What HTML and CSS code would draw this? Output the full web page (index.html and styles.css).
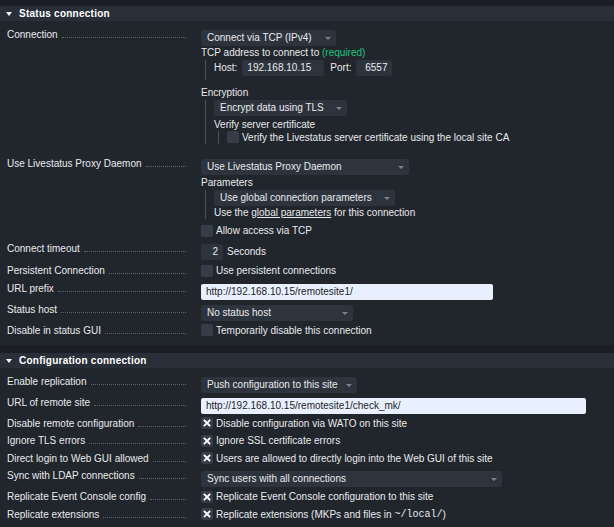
FILE: index.html
```html
<!DOCTYPE html>
<html>
<head>
<meta charset="utf-8">
<link rel="stylesheet" href="styles.css">
</head>
<body>
<div class="page">
  <section class="sec">
    <div class="sec-head"><span class="tri"></span>Status connection</div>
    <div class="sec-body">
      <div class="row">
        <div class="lbl"><span>Connection</span><span class="dots"></span></div>
        <div class="val">
          <div class="sel w135">Connect via TCP (IPv4)<span class="arr"></span></div>
          <div class="line">TCP address to connect to <span class="req">(required)</span></div>
          <div class="nest nest-host">
            <div class="hostrow">
              <span>Host:</span><span class="inp w82">192.168.10.15</span>
              <span class="port-lbl">Port:</span><span class="inp w36 right">6557</span>
            </div>
          </div>
          <div class="line enc">Encryption</div>
          <div class="nest nest-enc">
            <div class="sel w133">Encrypt data using TLS<span class="arr"></span></div>
            <div class="line verify">Verify server certificate</div>
            <div class="nest nest-deep">
              <div class="cb"><span class="box"></span>Verify the Livestatus server certificate using the local site CA</div>
            </div>
          </div>
        </div>
      </div>
      <div class="row">
        <div class="lbl"><span>Use Livestatus Proxy Daemon</span><span class="dots"></span></div>
        <div class="val">
          <div class="sel w208">Use Livestatus Proxy Daemon<span class="arr"></span></div>
          <div class="line params">Parameters</div>
          <div class="nest nest-params">
            <div class="sel w181">Use global connection parameters<span class="arr"></span></div>
            <div class="line">Use the <span class="link">global parameters</span> for this connection</div>
          </div>
          <div class="cb allow"><span class="box"></span>Allow access via TCP</div>
        </div>
      </div>
      <div class="row row-timeout">
        <div class="lbl"><span>Connect timeout</span><span class="dots"></span></div>
        <div class="val inline">
          <span class="inp w22 right">2</span><span class="unit">Seconds</span>
        </div>
      </div>
      <div class="row">
        <div class="lbl"><span>Persistent Connection</span><span class="dots"></span></div>
        <div class="val">
          <div class="cb"><span class="box"></span>Use persistent connections</div>
        </div>
      </div>
      <div class="row">
        <div class="lbl"><span>URL prefix</span><span class="dots"></span></div>
        <div class="val">
          <div class="inp light w292">http://192.168.10.15/remotesite1/</div>
        </div>
      </div>
      <div class="row">
        <div class="lbl"><span>Status host</span><span class="dots"></span></div>
        <div class="val">
          <div class="sel w152">No status host<span class="arr"></span></div>
        </div>
      </div>
      <div class="row">
        <div class="lbl"><span>Disable in status GUI</span><span class="dots"></span></div>
        <div class="val">
          <div class="cb"><span class="box"></span>Temporarily disable this connection</div>
        </div>
      </div>
    </div>
  </section>

  <section class="sec">
    <div class="sec-head"><span class="tri"></span>Configuration connection</div>
    <div class="sec-body">
      <div class="row">
        <div class="lbl"><span>Enable replication</span><span class="dots"></span></div>
        <div class="val">
          <div class="sel w156">Push configuration to this site<span class="arr"></span></div>
        </div>
      </div>
      <div class="row">
        <div class="lbl"><span>URL of remote site</span><span class="dots"></span></div>
        <div class="val">
          <div class="inp light w385">http://192.168.10.15/remotesite1/check_mk/</div>
        </div>
      </div>
      <div class="row">
        <div class="lbl"><span>Disable remote configuration</span><span class="dots"></span></div>
        <div class="val">
          <div class="cb"><span class="box"><svg viewBox="0 0 12 12" width="12" height="12"><path d="M3.5 3.5L8.5 8.5M8.5 3.5L3.5 8.5"/></svg></span>Disable configuration via WATO on this site</div>
        </div>
      </div>
      <div class="row">
        <div class="lbl"><span>Ignore TLS errors</span><span class="dots"></span></div>
        <div class="val">
          <div class="cb"><span class="box"><svg viewBox="0 0 12 12" width="12" height="12"><path d="M3.5 3.5L8.5 8.5M8.5 3.5L3.5 8.5"/></svg></span>Ignore SSL certificate errors</div>
        </div>
      </div>
      <div class="row">
        <div class="lbl"><span>Direct login to Web GUI allowed</span><span class="dots"></span></div>
        <div class="val">
          <div class="cb"><span class="box"><svg viewBox="0 0 12 12" width="12" height="12"><path d="M3.5 3.5L8.5 8.5M8.5 3.5L3.5 8.5"/></svg></span>Users are allowed to directly login into the Web GUI of this site</div>
        </div>
      </div>
      <div class="row">
        <div class="lbl"><span>Sync with LDAP connections</span><span class="dots"></span></div>
        <div class="val">
          <div class="sel w301">Sync users with all connections<span class="arr"></span></div>
        </div>
      </div>
      <div class="row">
        <div class="lbl"><span>Replicate Event Console config</span><span class="dots"></span></div>
        <div class="val">
          <div class="cb"><span class="box"><svg viewBox="0 0 12 12" width="12" height="12"><path d="M3.5 3.5L8.5 8.5M8.5 3.5L3.5 8.5"/></svg></span>Replicate Event Console configuration to this site</div>
        </div>
      </div>
      <div class="row">
        <div class="lbl"><span>Replicate extensions</span><span class="dots"></span></div>
        <div class="val">
          <div class="cb"><span class="box"><svg viewBox="0 0 12 12" width="12" height="12"><path d="M3.5 3.5L8.5 8.5M8.5 3.5L3.5 8.5"/></svg></span>Replicate extensions (MKPs and files in&nbsp;<span class="mono">~/local/</span>)</div>
        </div>
      </div>
    </div>
  </section>
</div>
</body>
</html>
```

FILE: styles.css
```css
* { box-sizing: border-box; }
html, body { margin: 0; padding: 0; }
body {
  background: #1b1f25;
  font-family: "Liberation Sans", Arial, sans-serif;
  font-size: 10px;
  color: #e9eaec;
  width: 614px;
  height: 527px;
  overflow: hidden;
}
.page { padding-top: 6px; }
.sec { background: #21262d; padding-bottom: 4px; }
.sec + .sec { margin-top: 8px; }
.sec-head {
  height: 15px;
  background: #292f38;
  display: flex;
  align-items: center;
  padding-left: 6px;
  font-weight: bold;
  letter-spacing: 0.25px;
  color: #ffffff;
}
.tri {
  width: 0; height: 0;
  border-left: 3px solid transparent;
  border-right: 3px solid transparent;
  border-top: 4px solid #ffffff;
  margin-right: 7px;
}
.sec-body { padding-top: 6.5px; }
.row { display: flex; padding: 0 0 3px 7px; }
.row-timeout { padding-bottom: 4.5px; }
.lbl {
  width: 194px;
  flex: none;
  display: flex;
  align-items: baseline;
  padding-right: 15px;
  line-height: 13px;
  height: 13px;
  white-space: nowrap;
}
.lbl .dots {
  flex: 1;
  border-bottom: 1px dotted #5d6573;
  margin-left: 4px;
}
.val { flex: 1; min-width: 0; }
.val.inline { display: flex; align-items: center; margin-top: 2px; }
.line { line-height: 13px; white-space: nowrap; }
.req { color: #1cc47c; }
.link { text-decoration: underline; }
.mono { font-family: "Liberation Mono", "DejaVu Sans Mono", monospace; font-size: 10px; }

.sel, .inp {
  height: 16px;
  line-height: 16px;
  background: #2e343e;
  border-radius: 3px;
  white-space: nowrap;
}
.sel { position: relative; padding-left: 6px; margin-top: 2px; }
.nest .sel { margin-top: 0; }
.arr {
  position: absolute;
  right: 5px;
  top: 7px;
  width: 0; height: 0;
  border-left: 3px solid transparent;
  border-right: 3px solid transparent;
  border-top: 3px solid #7c828c;
}
.inp { display: inline-block; padding: 0 5px; }
div.inp { display: block; margin-top: 2px; }
.inp.right { text-align: right; }
.inp.light { background: #e8f0fe; color: #1d1d1f; border-radius: 2px; }

.w22 { width: 22px; }
.w36 { width: 36px; }
.w82 { width: 82px; }
.w133 { width: 133px; }
.w135 { width: 135px; }
.w152 { width: 152px; }
.w156 { width: 156px; }
.w181 { width: 181px; }
.w208 { width: 208px; }
.w292 { width: 292px; }
.w301 { width: 301px; }
.w385 { width: 385px; }

.unit { margin-left: 4px; }

.nest {
  border-left: 1px solid #4a505a;
  margin-left: 4px;
  padding-left: 8px;
}
.nest-host { margin-top: 1px; padding-bottom: 4px; }
.hostrow { display: flex; align-items: center; gap: 5px; }
.hostrow .port-lbl { margin-left: 1px; }
.enc { margin-top: 6px; }
.nest-enc { margin-top: 1px; margin-bottom: 10.5px; }
.verify { margin-top: 2px; }
.nest-deep { margin-left: 4px; padding-left: 8px; }
.params { margin-top: 1px; }
.nest-params { margin-top: 1px; }
.allow { margin-top: 5px; }

.cb {
  display: flex;
  align-items: center;
  height: 13px;
  line-height: 13px;
  margin-bottom: 1.5px;
  white-space: nowrap;
}
.box {
  width: 12px;
  height: 12px;
  flex: none;
  background: #363d48;
  border-radius: 2px;
  margin-right: 3px;
  display: flex;
}
.box svg { display: block; }
.box path { stroke: #ffffff; stroke-width: 1.8; fill: none; stroke-linecap: square; }
```
